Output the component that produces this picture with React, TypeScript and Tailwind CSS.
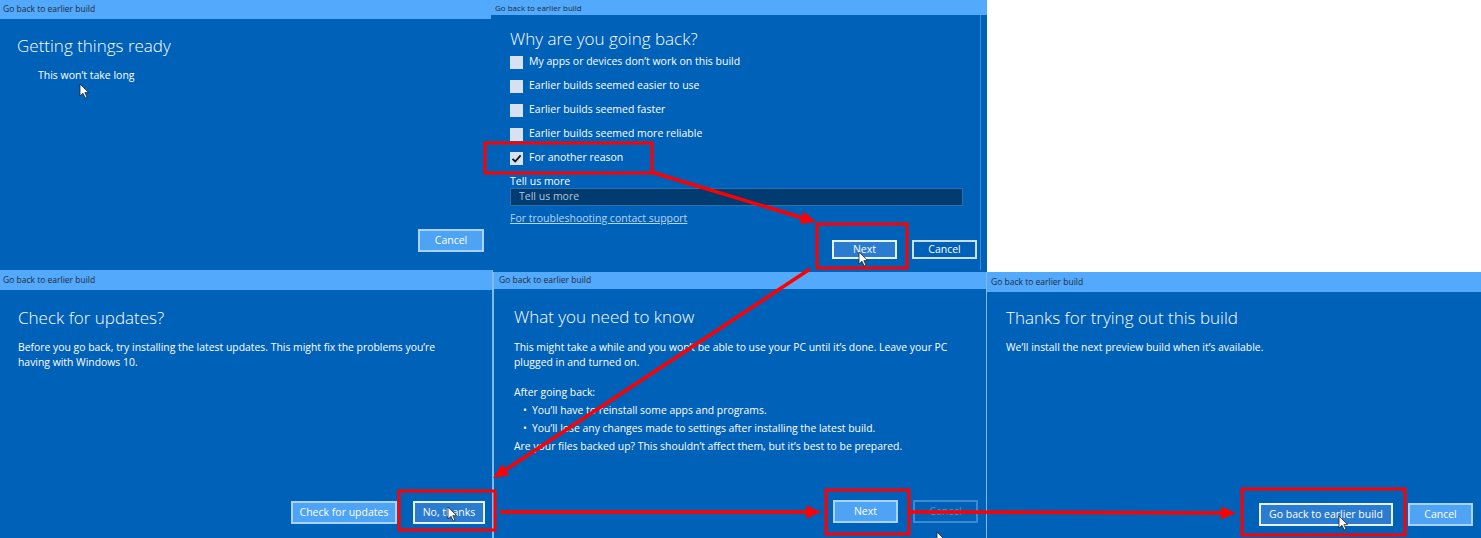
import React from "react";

type BtnKind = "light" | "focus" | "dark" | "faded";

const btnStyles: Record<BtnKind, string> = {
  light: "bg-[#4fa3f5] border-[#a9d3ff] text-white",
  focus: "bg-[#2b7bd0] border-[#e6f2ff] text-white",
  dark: "bg-[#0061b8] border-[#c8e0fa] text-white",
  faded: "bg-[#0061b8] border-[#3f88d2] text-[#4f92d6]",
};

function Btn({ kind, className, children }: { kind: BtnKind; className: string; children: React.ReactNode }) {
  return (
    <div className={`flex items-center justify-center border-2 text-[10.5px] leading-none ${btnStyles[kind]} ${className}`}>
      {children}
    </div>
  );
}

function TitleBar({ className }: { className: string }) {
  return (
    <div className={`flex shrink-0 items-center bg-[#53a9fc] text-[#1d2b3c] ${className}`}>
      Go back to earlier build
    </div>
  );
}

function Check({ checked }: { checked?: boolean }) {
  return (
    <div className="flex h-[13px] w-[13px] items-center justify-center bg-[#d6e1f1]">
      {checked && (
        <svg width="11" height="11" viewBox="0 0 11 11">
          <path d="M1.5 5.8 L4.2 8.5 L9.6 2.4" fill="none" stroke="#111" strokeWidth="1.8" />
        </svg>
      )}
    </div>
  );
}

const reasons = [
  "My apps or devices don’t work on this build",
  "Earlier builds seemed easier to use",
  "Earlier builds seemed faster",
  "Earlier builds seemed more reliable",
];

// arrow head polygon from a line end
function head(x1: number, y1: number, x2: number, y2: number) {
  const len = Math.hypot(x2 - x1, y2 - y1);
  const ux = (x2 - x1) / len;
  const uy = (y2 - y1) / len;
  const bx = x2 - ux * 15;
  const by = y2 - uy * 15;
  const px = -uy * 6.5;
  const py = ux * 6.5;
  return `${x2},${y2} ${bx + px},${by + py} ${bx - px},${by - py}`;
}

const arrows = [
  [651, 172, 816, 222],
  [810, 269, 493, 478],
  [500, 512, 821, 512],
  [910, 512, 1236, 513],
];

const boxes = [
  [485, 143, 167, 30],
  [817, 224, 90, 44],
  [399, 491, 96, 39],
  [826, 490, 83, 44],
  [1242, 489, 163, 46],
];

const cursors = [
  [80, 84],
  [859, 252],
  [448, 507],
  [937, 532],
  [1339, 516],
];

export default function App() {
  return (
    <div className="relative h-[538px] w-[1481px] overflow-hidden bg-white font-['Open_Sans',sans-serif] text-white">
      <div className="flex h-[270px]">
        {/* getting things ready */}
        <div className="flex w-[491px] flex-col bg-[#0061b8]">
          <TitleBar className="h-[19px] pl-[3px] text-[8.5px]" />
          <h1 className="mt-[16px] pl-[17px] text-[17px] font-light leading-[22px]">Getting things ready</h1>
          <p className="mt-[11px] pl-[38px] text-[10.5px] leading-[15px]">This won’t take long</p>
          <div className="mt-auto mb-[18px] mr-[7px] flex justify-end">
            <Btn kind="light" className="h-[23px] w-[66px]">Cancel</Btn>
          </div>
        </div>

        {/* why are you going back */}
        <div className="flex h-[272px] w-[496px] flex-col bg-[#0061b8]">
          <TitleBar className="h-[15px] pl-[4px] text-[8px]" />
          <div className="flex flex-1 flex-col border-r border-[#3b8ad6] mr-[6px] pl-[19px]">
            <h2 className="mt-[13px] text-[17px] font-light leading-[22px]">Why are you going back?</h2>
            {reasons.map((r) => (
              <div key={r} className="flex h-[24px] items-center gap-[6px] text-[10.5px]">
                <Check />
                <span>{r}</span>
              </div>
            ))}
            <div className="flex h-[24px] items-center gap-[6px] text-[10.5px]">
              <Check checked />
              <span>For another reason</span>
            </div>
            <div className="mt-[4px] text-[10.5px] leading-[14px]">Tell us more</div>
            <div className="flex h-[18px] w-[453px] items-center border border-[#2f6fa8] bg-[#003b72] pl-[8px] text-[10.5px] text-[#b7c7d8]">
              Tell us more
            </div>
            <div className="mt-[5px] text-[10.5px] leading-[14px] text-[#b5d6fb] underline">For troubleshooting contact support</div>
            <div className="mt-[15px] mr-[3px] flex justify-end gap-[15px]">
              <Btn kind="focus" className="h-[19px] w-[65px]">Next</Btn>
              <Btn kind="dark" className="h-[19px] w-[65px]">Cancel</Btn>
            </div>
          </div>
        </div>
        <div className="flex-1 bg-white" />
      </div>

      <div className="flex h-[268px]">
        {/* check for updates */}
        <div className="flex w-[493px] flex-col border-r border-[#7fbaf5] bg-[#0061b8]">
          <TitleBar className="h-[20px] pl-[3px] text-[8.5px]" />
          <h2 className="mt-[17px] pl-[18px] text-[17px] font-light leading-[22px]">Check for updates?</h2>
          <p className="mt-[11px] w-[450px] pl-[18px] text-[10.4px] leading-[15px]">
            Before you go back, try installing the latest updates. This might fix the problems you’re having with Windows 10.
          </p>
          <div className="mt-auto mb-[14px] mr-[7px] flex justify-end gap-[16px]">
            <Btn kind="light" className="h-[23px] w-[106px]">Check for updates</Btn>
            <Btn kind="focus" className="h-[23px] w-[72px]">No, thanks</Btn>
          </div>
        </div>

        {/* what you need to know */}
        <div className="flex w-[494px] flex-col bg-[#0061b8] pt-[2px]">
          <div className="flex flex-1 flex-col border-l border-r border-[#7fbaf5]">
            <TitleBar className="h-[17px] pl-[5px] text-[8.5px]" />
            <h2 className="mt-[17px] pl-[20px] text-[17px] font-light leading-[22px]">What you need to know</h2>
            <div className="pl-[20px] text-[10.4px]">
              <p className="mt-[12px] w-[455px] leading-[15px]">
                This might take a while and you won’t be able to use your PC until it’s done. Leave your PC plugged in and turned on.
              </p>
              <p className="mt-[13px] leading-[18px]">After going back:</p>
              <ul className="leading-[18px]">
                <li className="flex"><span className="w-[18px] pl-[9px]">•</span>You’ll have to reinstall some apps and programs.</li>
                <li className="flex"><span className="w-[18px] pl-[9px]">•</span>You’ll lose any changes made to settings after installing the latest build.</li>
              </ul>
              <p className="leading-[18px]">Are your files backed up? This shouldn’t affect them, but it’s best to be prepared.</p>
            </div>
            <div className="mt-auto mb-[15px] mr-[8px] flex justify-end gap-[15px]">
              <Btn kind="light" className="h-[23px] w-[65px]">Next</Btn>
              <Btn kind="faded" className="h-[23px] w-[65px]">Cancel</Btn>
            </div>
          </div>
        </div>

        {/* thanks */}
        <div className="flex flex-1 flex-col bg-white pt-[2px]">
          <div className="flex flex-1 flex-col bg-[#0061b8]">
            <TitleBar className="h-[20px] pl-[4px] text-[8.5px]" />
            <h2 className="mt-[15px] pl-[19px] text-[17px] font-light leading-[22px]">Thanks for trying out this build</h2>
            <p className="mt-[11px] pl-[19px] text-[10.4px] leading-[15px]">We’ll install the next preview build when it’s available.</p>
            <div className="mt-auto mb-[12px] mr-[8px] flex justify-end gap-[15px]">
              <Btn kind="focus" className="h-[23px] w-[134px]">Go back to earlier build</Btn>
              <Btn kind="light" className="h-[23px] w-[65px]">Cancel</Btn>
            </div>
          </div>
        </div>
      </div>

      {/* annotations */}
      <svg className="pointer-events-none absolute inset-0" width="1481" height="538">
        {boxes.map(([x, y, w, h], i) => (
          <rect key={i} x={x} y={y} width={w} height={h} fill="none" stroke="#ff0000" strokeWidth="3" />
        ))}
        {arrows.map(([x1, y1, x2, y2], i) => {
          const len = Math.hypot(x2 - x1, y2 - y1);
          const ex = x2 - ((x2 - x1) / len) * 12;
          const ey = y2 - ((y2 - y1) / len) * 12;
          return (
            <g key={i}>
              <line x1={x1} y1={y1} x2={ex} y2={ey} stroke="#ff0000" strokeWidth="3.5" />
              <polygon points={head(x1, y1, x2, y2)} fill="#ff0000" />
            </g>
          );
        })}
        {cursors.map(([x, y], i) => (
          <path
            key={i}
            transform={`translate(${x} ${y})`}
            d="M0 0 L0 12 L3 9.3 L5.2 14 L7 13.2 L4.9 8.6 L8.6 8.6 Z"
            fill="#fff"
            stroke="#222"
            strokeWidth="0.8"
          />
        ))}
      </svg>
    </div>
  );
}
